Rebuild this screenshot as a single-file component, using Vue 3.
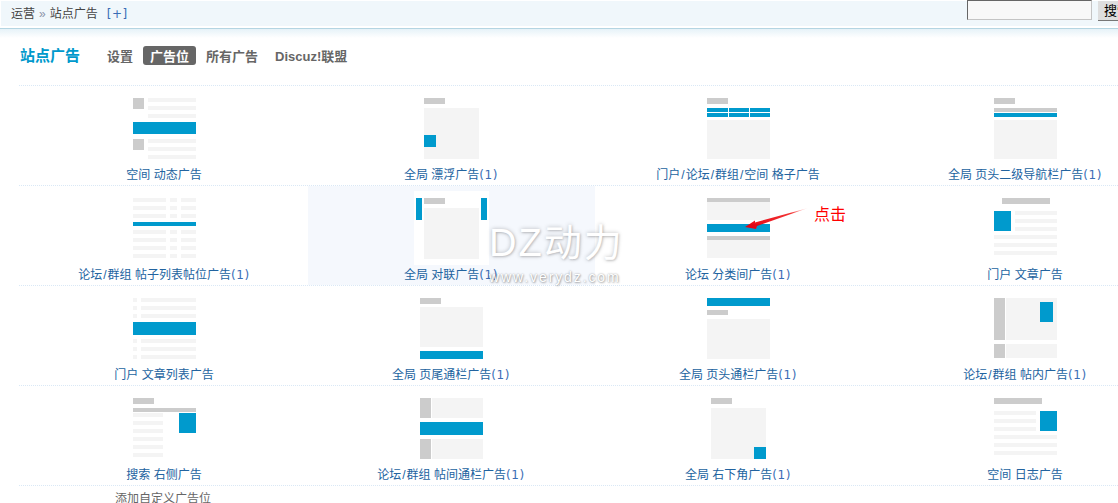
<script setup>
const G = '#cccccc'
const L = '#f4f4f4'
const B = '#009acd'
const lines = (x, w, ys, c = L) => ys.map((y) => [x, y, w, 4, c])

const rows = [
  [
    { label: '空间 动态广告', w: 63, r: [[0,0,11,11,G],[0,41,11,11,G],...lines(15,48,[0,8,16,41,49,57]),[0,24,63,12,B]] },
    { label: '全局 漂浮广告(1)', w: 71, r: [[8,0,21,6,G],[8,10,55,51,L],[8,37,12,12,B]] },
    { label: '门户/论坛/群组/空间 格子广告', w: 63, r: [[0,0,21,6,G],[0,22,63,39,L],[0,10,21,4,B],[22,10,20,4,B],[43,10,20,4,B],[0,15,21,4,B],[22,15,20,4,B],[43,15,20,4,B]] },
    { label: '全局 页头二级导航栏广告(1)', w: 63, r: [[0,0,21,6,G],[0,10,63,4,G],[0,15,63,4,B],[0,22,63,39,L]] },
  ],
  [
    { label: '论坛/群组 帖子列表帖位广告(1)', w: 63, r: [...lines(0,33,[0,8,16,32,40,48,56]),...lines(37,7,[0,8,16,32,40,48,56]),...lines(48,15,[0,8,16,32,40,48,56]),[0,24,63,4,B]] },
    { label: '全局 对联广告(1)', w: 71, active: true, r: [[0,0,6,22,B],[65,0,6,22,B],[8,0,21,6,G],[8,10,55,51,L]] },
    { label: '论坛 分类间广告(1)', w: 63, r: [[0,0,63,4,G],[0,4,63,18,L],[0,26,63,8,B],[0,38,63,4,G],[0,42,63,18,L]] },
    { label: '门户 文章广告', w: 63, r: [[8,0,48,6,G],[0,13,17,20,B],...lines(21,42,[13,21,29]),...lines(0,63,[37,45,53])] },
  ],
  [
    { label: '门户 文章列表广告', w: 63, r: [...lines(0,4,[0,8,16,41,49,57]),...lines(8,55,[0,8,16,41,49,57]),[0,24,63,13,B]] },
    { label: '全局 页尾通栏广告(1)', w: 63, r: [[0,0,21,6,G],[0,9,63,40,L],[0,53,63,8,B]] },
    { label: '全局 页头通栏广告(1)', w: 63, r: [[0,0,63,8,B],[0,12,21,5,G],[0,21,63,40,L]] },
    { label: '论坛/群组 帖内广告(1)', w: 63, r: [[0,0,11,42,G],[12,0,51,42,L],[46,4,13,20,B],[0,46,11,14,G],[12,46,51,14,L]] },
  ],
  [
    { label: '搜索 右侧广告', w: 63, r: [[0,0,21,6,G],[0,10,63,4,G],...lines(0,30,[15,23,31,39,47,55]),[46,15,17,20,B]] },
    { label: '论坛/群组 帖间通栏广告(1)', w: 63, r: [[0,0,11,20,G],[12,0,51,20,L],[0,24,63,13,B],[0,41,11,20,G],[12,41,51,20,L]] },
    { label: '全局 右下角广告(1)', w: 55, r: [[0,0,21,6,G],[0,10,55,51,L],[43,49,12,12,B]] },
    { label: '空间 日志广告', w: 63, r: [[0,0,48,6,G],...lines(0,42,[13,21,29]),...lines(0,63,[37,45,53]),[46,13,17,20,B]] },
  ],
]

// Split a label into plain text, slash and "(n)" pieces: the last two are set wider.
const segments = (s) =>
  s.split(/(\/|\(\d+\))/).filter(Boolean).map((t) => ({
    t,
    k: t === '/' ? 'slash' : t.startsWith('(') ? 'count' : 'text',
  }))
</script>

<template>
  <div class="page">
    <header class="topbar">
      <nav class="crumbs">
        <span>运营</span>
        <span class="sep">»</span>
        <span>站点广告</span>
        <a class="plus">[+]</a>
      </nav>
      <form class="search" @submit.prevent>
        <input class="search-input" type="text" />
        <button class="search-btn" type="button">搜索</button>
      </form>
    </header>
    <div class="shade"></div>

    <div class="title-row">
      <h3 class="title">站点广告</h3>
      <ul class="tabs">
        <li>设置</li>
        <li class="on">广告位</li>
        <li>所有广告</li>
        <li>Discuz!联盟</li>
      </ul>
    </div>

    <section class="table">
      <div v-for="(row, i) in rows" :key="i" class="row">
        <a v-for="cell in row" :key="cell.label" class="cell" :class="{ active: cell.active }">
          <span class="thumb">
            <svg :width="cell.w" height="61" :viewBox="`0 0 ${cell.w} 61`" shape-rendering="crispEdges">
              <rect v-for="(q, k) in cell.r" :key="k" :x="q[0]" :y="q[1]" :width="q[2]" :height="q[3]" :fill="q[4]" />
            </svg>
          </span>
          <span class="label"><span v-for="(s, k) in segments(cell.label)" :key="k" :class="s.k">{{ s.t }}</span></span>
        </a>
      </div>
      <div class="row add-row"><span class="add">添加自定义广告位</span></div>
    </section>

    <svg class="arrow" width="70" height="26" viewBox="0 0 70 26">
      <defs>
        <linearGradient id="arrowFade" x1="1" y1="0" x2="0" y2="1">
          <stop offset="0" stop-color="#ff6060" stop-opacity="0.1" />
          <stop offset="0.25" stop-color="#f01010" stop-opacity="0.85" />
          <stop offset="1" stop-color="#e60012" />
        </linearGradient>
      </defs>
      <path d="M1 21 L11 14.5 L11 16.5 L64 2 L13 20 L12 23 Z" fill="url(#arrowFade)" />
    </svg>
    <span class="note">点击</span>

    <div class="mark">
      <div class="mark-big">DZ动力</div>
      <div class="mark-small">www.verydz.com</div>
    </div>
  </div>
</template>

<style>
html, body { margin: 0; padding: 0; background: #fff; overflow: hidden; }
</style>

<style scoped>
.page {
  position: relative;
  width: 1118px;
  height: 503px;
  overflow: hidden;
  background: #fff;
  font: 12px/18px "Liberation Sans", "Noto Sans CJK SC", sans-serif;
  color: #666;
}
.topbar {
  display: flex;
  justify-content: space-between;
  height: 25px;
  margin: 1px 0 2px 1px;
  padding-left: 10px;
  background: #f0f7fb;
}
.crumbs {
  display: flex;
  align-items: center;
  height: 25px;
  color: #444;
}
.sep { margin: 0 4px; color: #8a93a8; }
.plus {
  margin-left: 9px;
  color: #3a6db5;
  font-family: "DejaVu Sans", sans-serif;
  font-size: 12px;
  letter-spacing: 0.5px;
}
.search {
  display: flex;
  align-items: flex-start;
  gap: 6px;
  margin: -1px -20px 0 0;
}
.search-input {
  box-sizing: border-box;
  width: 125px;
  height: 20px;
  padding: 0;
  background: #f8f8f8;
  border: 1px solid #c4c4c4;
  border-top-color: #666;
  border-left-color: #666;
  outline: none;
}
.search-btn {
  box-sizing: border-box;
  width: 40px;
  height: 20px;
  margin-top: 1px;
  padding: 0 0 0 6px;
  background: #dedede;
  border: 0;
  border-bottom: 1px solid #777;
  color: #000;
  font: 13px/18px "Liberation Sans", "Noto Sans CJK SC", sans-serif;
  white-space: nowrap;
  text-align: left;
}
.shade {
  height: 9px;
  border-top: 1px solid #b4d5e2;
  background: linear-gradient(#e6f2f8, #fff);
}
.title-row {
  display: flex;
  align-items: center;
  height: 19px;
  margin: 8px 0 20px 20px;
}
.title {
  margin: 0 27px 0 0;
  width: 60px;
  color: #0099cc;
  font-size: 15px;
  line-height: 21px;
  font-weight: 700;
  white-space: nowrap;
}
.tabs {
  display: flex;
  margin: 0;
  padding: 0;
  list-style: none;
  font-size: 13px;
  font-weight: 700;
  color: #666;
  gap: 10px;
}
.tabs li { height: 19px; line-height: 22px; white-space: nowrap; }
.tabs li:last-child { margin-left: 7px; }
.tabs li.on {
  padding: 0 7px;
  background: #666;
  color: #fff;
  border-radius: 3px;
}
.table { margin-left: 19px; }
.row {
  display: grid;
  grid-template-columns: repeat(4, 287px);
  height: 99px;
  padding-left: 2px;
  border-top: 1px dotted #d9e8f6;
}
.cell {
  display: flex;
  flex-direction: column;
  align-items: center;
  padding-top: 5px;
  color: #22639f;
}
.cell.active { background: #f5f8fd; }
.thumb {
  display: block;
  padding: 7px 2px 6px;
  height: 61px;
}
.thumb svg { display: block; }
.cell.active .thumb { background: #fff; }
.label { display: block; margin: 1px 1px 0 0; white-space: nowrap; line-height: 18px; }
.slash { padding: 0 1px; }
.count {
  color: #3a6db5;
  font-family: "DejaVu Sans", sans-serif;
  letter-spacing: 0.6px;
}
.add-row { display: block; padding: 4px 0 0 96px; height: auto; }
.add { color: #666; }
.arrow { position: absolute; left: 744px; top: 206px; }
.note {
  position: absolute;
  left: 814px;
  top: 205px;
  color: #ff0000;
  font-size: 16px;
  line-height: 20px;
}
.mark {
  position: absolute;
  left: 489px;
  top: 218px;
  color: #fff;
  text-shadow: 0 0 4px rgba(0, 0, 0, 0.25), 1px 1px 2px rgba(0, 0, 0, 0.14);
  white-space: nowrap;
}
.mark-big { font-size: 38px; line-height: 50px; letter-spacing: 2px; font-weight: 400; }
.mark-small {
  font-size: 14px;
  line-height: 18px;
  letter-spacing: 1.9px;
  text-shadow: 0 0 2px rgba(0, 0, 0, 0.4), 1px 1px 2px rgba(0, 0, 0, 0.25);
}
</style>
